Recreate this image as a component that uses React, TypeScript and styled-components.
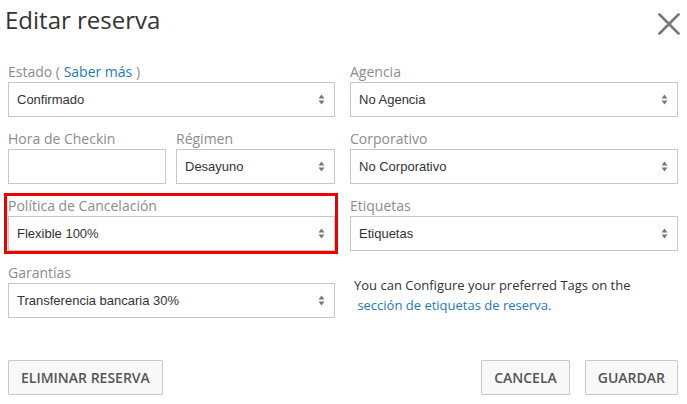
import styled, { createGlobalStyle } from "styled-components";

const GlobalStyle = createGlobalStyle`
  body {
    margin: 0;
    background: #fff;
    font-family: "Open Sans", "Liberation Sans", sans-serif;
    color: #333;
  }
`;

function Arrows() {
  return (
    <svg width="7" height="11" viewBox="0 0 7 11">
      <path d="M3.5 0.5 L6.5 4.5 L0.5 4.5 Z" fill="#777" />
      <path d="M3.5 10.5 L6.5 6.5 L0.5 6.5 Z" fill="#777" />
    </svg>
  );
}

function Select({ value }: { value: string }) {
  return (
    <SelectBox>
      <span>{value}</span>
      <Arrows />
    </SelectBox>
  );
}

export default function App() {
  return (
    <>
      <GlobalStyle />
      <Modal>
        <Header>
          <Title>Editar reserva</Title>
          <CloseButton aria-label="Cerrar">
            <svg width="22" height="22" viewBox="0 0 22 22">
              <path
                d="M1.5 1.5 L20.5 20.5 M20.5 1.5 L1.5 20.5"
                stroke="#777"
                strokeWidth="2.6"
                strokeLinecap="round"
              />
            </svg>
          </CloseButton>
        </Header>

        <FormGrid>
          <Field>
            <Label>
              Estado ( <Link href="#">Saber más</Link> )
            </Label>
            <Select value="Confirmado" />
          </Field>
          <Field>
            <Label>Agencia</Label>
            <Select value="No Agencia" />
          </Field>

          <SplitRow>
            <Field>
              <Label>Hora de Checkin</Label>
              <TextInput />
            </Field>
            <Field>
              <Label>Régimen</Label>
              <Select value="Desayuno" />
            </Field>
          </SplitRow>
          <Field>
            <Label>Corporativo</Label>
            <Select value="No Corporativo" />
          </Field>

          <Field $highlighted>
            <Label>Política de Cancelación</Label>
            <Select value="Flexible 100%" />
          </Field>
          <Field>
            <Label>Etiquetas</Label>
            <Select value="Etiquetas" />
          </Field>

          <Field>
            <Label>Garantías</Label>
            <Select value="Transferencia bancaria 30%" />
          </Field>
          <HelpText>
            You can Configure your preferred Tags on the
            <br />
            <Link href="#">&nbsp;sección de etiquetas de reserva.</Link>
          </HelpText>
        </FormGrid>

        <Footer>
          <Button>Eliminar reserva</Button>
          <ButtonGroup>
            <Button>Cancela</Button>
            <Button>Guardar</Button>
          </ButtonGroup>
        </Footer>
      </Modal>
    </>
  );
}

const Modal = styled.div`
  width: 687px;
  height: 404px;
  box-sizing: border-box;
  padding: 0 9px 0 8px;
`;

const Header = styled.div`
  display: flex;
  justify-content: space-between;
  align-items: flex-start;
  height: 65px;
  margin-left: -3px;
`;

const Title = styled.h1`
  margin: 0;
  padding-top: 4px;
  font-size: 24px;
  font-weight: 400;
  line-height: 32px;
  color: #333;
`;

const CloseButton = styled.button`
  border: 0;
  background: none;
  padding: 0;
  margin: 13px -2px 0 0;
  cursor: pointer;
  line-height: 0;
`;

const FormGrid = styled.div`
  display: grid;
  grid-template-columns: 327px 328px;
  column-gap: 15px;
  row-gap: 15px;
`;

const SplitRow = styled.div`
  display: grid;
  grid-template-columns: 158px 159px;
  column-gap: 10px;
`;

const Field = styled.div<{ $highlighted?: boolean }>`
  display: flex;
  flex-direction: column;
  position: relative;

  &::after {
    content: "";
    display: ${(p) => (p.$highlighted ? "block" : "none")};
    position: absolute;
    top: -6px;
    left: -4px;
    right: -3px;
    bottom: -3px;
    border: 3px solid #f00000;
    pointer-events: none;
  }
`;

const Label = styled.label`
  font-size: 14px;
  line-height: 14px;
  padding-bottom: 3px;
  color: #8c8c8c;
`;

const Link = styled.a`
  color: #2779b7;
  text-decoration: none;
`;

const SelectBox = styled.div`
  height: 35px;
  box-sizing: border-box;
  border: 1px solid #c6c6c6;
  background: #fff;
  display: flex;
  align-items: center;
  justify-content: space-between;
  padding: 0 9px 0 8px;
  font-family: "Liberation Sans", Arial, sans-serif;
  font-size: 13px;
  color: #333;
`;

const TextInput = styled.input`
  height: 35px;
  box-sizing: border-box;
  border: 1px solid #c6c6c6;
  padding: 0 8px;
  font-family: "Liberation Sans", Arial, sans-serif;
  font-size: 13px;
  outline: none;
`;

const HelpText = styled.p`
  margin: 0;
  padding: 9px 0 0 4px;
  font-size: 13px;
  line-height: 20px;
  color: #333;
`;

const Footer = styled.div`
  display: flex;
  justify-content: space-between;
  margin-top: 42px;
`;

const ButtonGroup = styled.div`
  display: flex;
  gap: 15px;
`;

const Button = styled.button`
  height: 35px;
  padding: 0 12px;
  border: 1px solid #c8c8c8;
  border-radius: 1px;
  background: #f8f8f8;
  font-family: "Open Sans", "Liberation Sans", sans-serif;
  font-weight: 600;
  font-size: 14px;
  text-transform: uppercase;
  color: #555;
  cursor: pointer;
`;
